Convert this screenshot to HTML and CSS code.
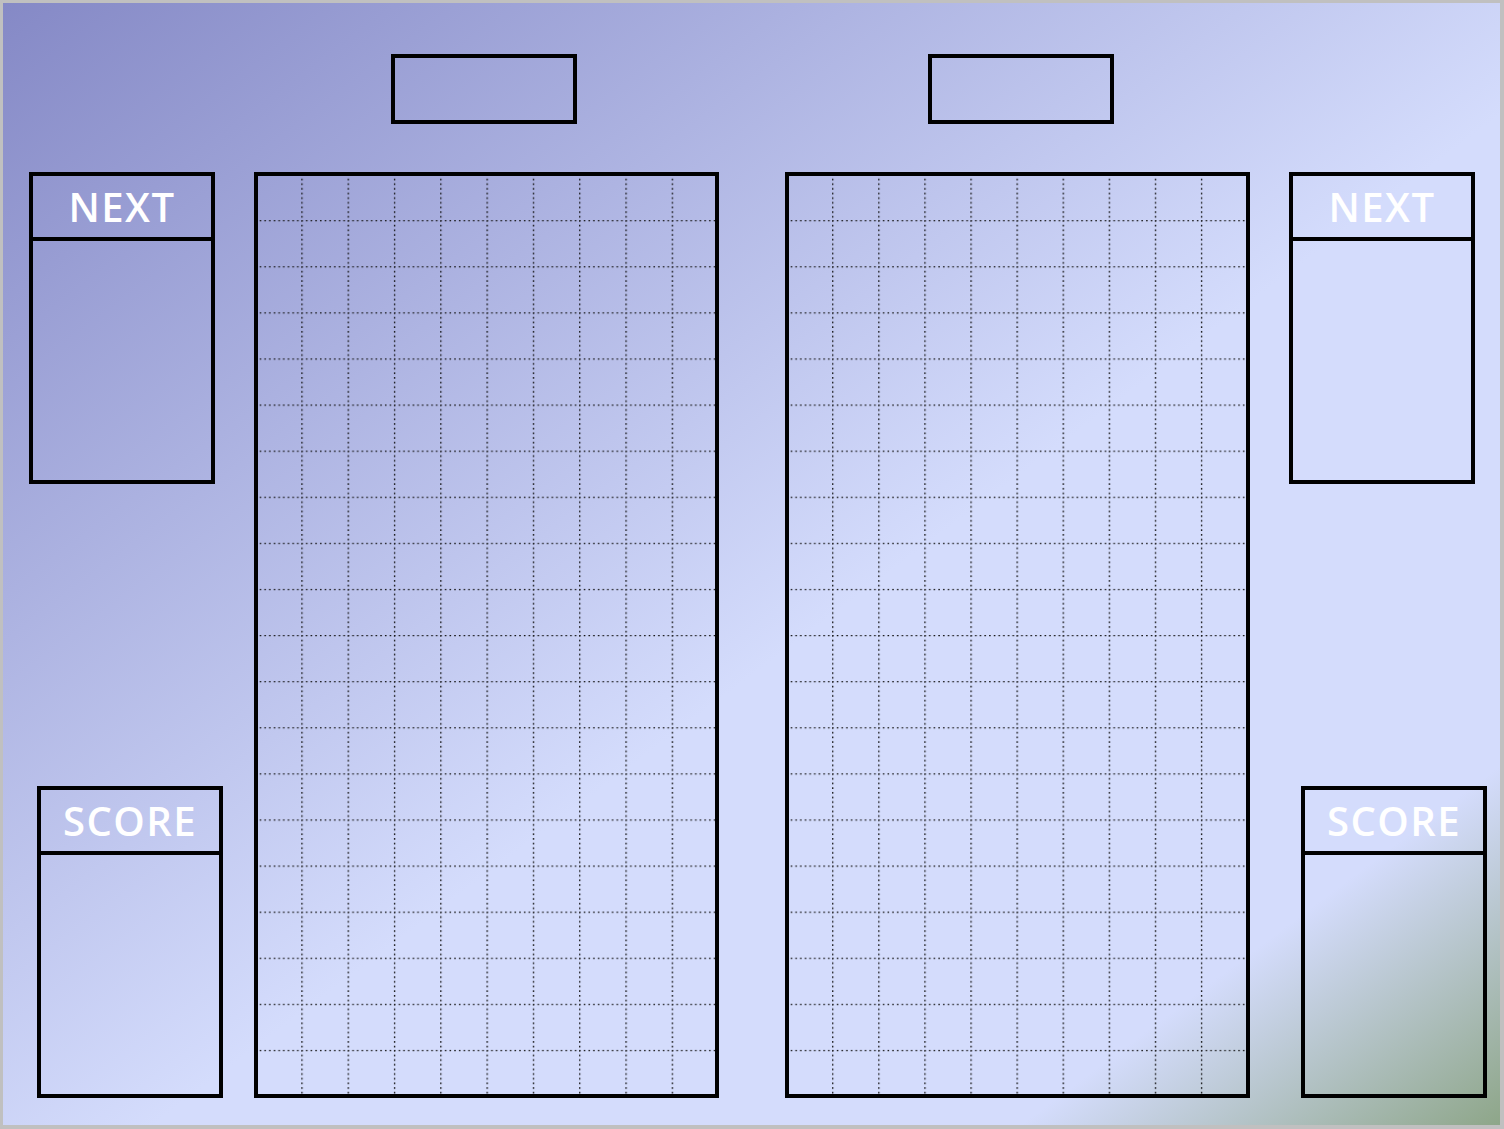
FILE: index.html
```html
<!DOCTYPE html>
<html lang="en">
<head>
    <meta charset="UTF-8">
    <title>Tetris Battle</title>
    <link rel="stylesheet" href="styles.css">
</head>
<body>
    <div class="frame">
        <!-- Player 1 side panels -->
        <div class="side side-left">
            <div class="panel panel-next">
                <div class="panel-head">NEXT</div>
                <div class="panel-body"></div>
            </div>
            <div class="panel panel-score">
                <div class="panel-head">SCORE</div>
                <div class="panel-body"></div>
            </div>
        </div>

        <div class="player player-one">
            <div class="name-box"></div>
            <div class="board">
                <svg xmlns="http://www.w3.org/2000/svg">
                    <defs>
                        <pattern id="cellsOne" x="-3" y="-2" width="46.3" height="46.1" patternUnits="userSpaceOnUse">
                            <path d="M0.5 0 V46.1 M0 0.5 H46.3" class="cell-line"/>
                        </pattern>
                    </defs>
                    <rect width="100%" height="100%" fill="url(#cellsOne)"/>
                </svg>
            </div>
        </div>

        <div class="player player-two">
            <div class="name-box"></div>
            <div class="board">
                <svg xmlns="http://www.w3.org/2000/svg">
                    <defs>
                        <pattern id="cellsTwo" x="-3" y="-2" width="46.1" height="46.1" patternUnits="userSpaceOnUse">
                            <path d="M0.5 0 V46.1 M0 0.5 H46.1" class="cell-line"/>
                        </pattern>
                    </defs>
                    <rect width="100%" height="100%" fill="url(#cellsTwo)"/>
                </svg>
            </div>
        </div>

        <!-- Player 2 side panels -->
        <div class="side side-right">
            <div class="panel panel-next">
                <div class="panel-head">NEXT</div>
                <div class="panel-body"></div>
            </div>
            <div class="panel panel-score">
                <div class="panel-head">SCORE</div>
                <div class="panel-body"></div>
            </div>
        </div>
    </div>
</body>
</html>
```

FILE: styles.css
```css
* {
    box-sizing: border-box;
}

body {
    margin: 0;
    padding: 0;
    font-family: "Open Sans", "Liberation Sans", sans-serif;
    overflow: hidden;
}

.frame {
    width: 1504px;
    height: 1129px;
    border-style: solid;
    border-color: #c0c0c0;
    border-width: 3px 4px 4px 3px;
    background: linear-gradient(to bottom right, #8589c6 0%, #d4dcfc 55%, #d4dcfc 84%, #8ea689 100%);
    display: flex;
    align-items: flex-start;
}

.side {
    width: 251px;
    flex: none;
    padding-top: 169px;
    display: flex;
    flex-direction: column;
    align-items: flex-start;
}

.side-right {
    width: auto;
    flex: 1;
}

.panel {
    width: 186px;
    height: 312px;
    border: 4px solid #000;
    display: flex;
    flex-direction: column;
}

.panel-head {
    height: 65px;
    flex: none;
    border-bottom: 4px solid #000;
    display: flex;
    align-items: center;
    justify-content: center;
    color: #fff;
    font-size: 40px;
    font-weight: 600;
    letter-spacing: 1.5px;
    line-height: 1;
}

.panel-body {
    flex: 1;
}

.panel-score {
    margin-top: 302px;
}

.side-left .panel-next {
    margin-left: 26px;
}

.side-left .panel-score {
    margin-left: 34px;
}

.side-right .panel-next {
    margin-left: 39px;
}

.side-right .panel-score {
    margin-left: 51px;
}

.player {
    width: 465px;
    flex: none;
    display: flex;
    flex-direction: column;
}

.player-two {
    margin-left: 66px;
}

.name-box {
    width: 186px;
    height: 70px;
    margin-top: 51px;
    border: 4px solid #000;
}

.player-one .name-box {
    margin-left: 137px;
}

.player-two .name-box {
    margin-left: 143px;
}

.board {
    height: 926px;
    margin-top: 48px;
    border: 4px solid #000;
}

.board svg {
    display: block;
    width: 100%;
    height: 100%;
}

.cell-line {
    fill: none;
    stroke: #111;
    stroke-width: 1.6;
    stroke-dasharray: 1.6 3.07;
}
```
